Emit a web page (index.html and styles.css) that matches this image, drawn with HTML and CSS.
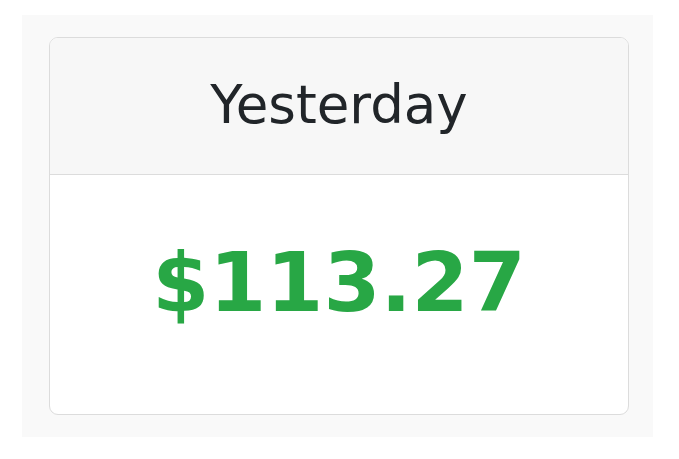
FILE: index.html
```html
<!DOCTYPE html>
<html lang="en">

<head>
  <meta charset="UTF-8">
  <meta name="viewport" content="width=device-width, initial-scale=1.0">
  <title>Yesterday</title>
  <link rel="stylesheet" href="styles.css">
</head>

<body>
  <div class="painel">
    <div class="cartao">
      <div class="cabecalho">
        <h2>Yesterday</h2>
      </div>
      <div class="corpo">
        <p class="valor">$113.27</p>
      </div>
    </div>
  </div>
</body>

</html>
```

FILE: styles.css
```css
body {
  margin: 0;
  font-family: "DejaVu Sans", Verdana, sans-serif;
  background-color: #fff;
}

.painel {
  width: 631px;
  height: 422px;
  box-sizing: border-box;
  margin: 15px 0 0 22px;
  padding: 22px 24px 24px 27px;
  background-color: #f9f9f9;
}

.cartao {
  height: 100%;
  display: flex;
  flex-direction: column;
  background-color: #fff;
  border: 1px solid #dcdcdc;
  border-radius: 9px;
  overflow: hidden;
}

.cabecalho {
  height: 136px;
  display: flex;
  align-items: center;
  justify-content: center;
  background-color: #f7f7f7;
  border-bottom: 1px solid #dcdcdc;
}

.cabecalho h2 {
  margin: 0 0 4px;
  font-size: 53px;
  font-weight: 400;
  color: #212529;
}

.corpo {
  flex: 1;
  display: flex;
  align-items: center;
  justify-content: center;
  padding-bottom: 24px;
}

.valor {
  margin: 0;
  font-size: 82px;
  font-weight: 700;
  color: #28a745;
}
```
